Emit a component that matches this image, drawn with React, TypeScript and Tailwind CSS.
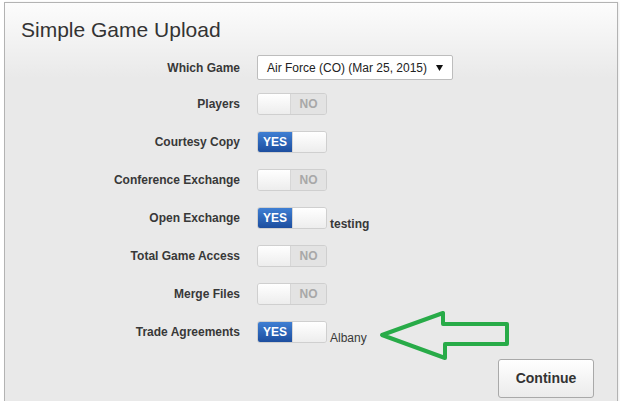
const rows: { label: string; on: boolean; note?: string; noteBold?: boolean }[] = [
  { label: 'Players', on: false },
  { label: 'Courtesy Copy', on: true },
  { label: 'Conference Exchange', on: false },
  { label: 'Open Exchange', on: true, note: 'testing', noteBold: true },
  { label: 'Total Game Access', on: false },
  { label: 'Merge Files', on: false },
  { label: 'Trade Agreements', on: true, note: 'Albany' },
];

function Toggle({ on }: { on: boolean }) {
  return (
    <div className="flex h-[22px] w-[70px] overflow-hidden rounded-[3px] border border-[#cfcfcf] text-[12px] font-bold">
      {on ? (
        <>
          <div className="flex w-[35px] items-center justify-center bg-linear-to-b from-[#3f7fd3] to-[#1d4e9f] text-white">YES</div>
          <div className="w-[35px] border-l border-[#d6d6d6] bg-linear-to-b from-white to-[#ededed]" />
        </>
      ) : (
        <>
          <div className="w-[34px] border-r border-[#d6d6d6] bg-linear-to-b from-white to-[#ededed]" />
          <div className="flex w-[36px] items-center justify-center bg-[#e3e3e3] text-[#a8a8a8]">NO</div>
        </>
      )}
    </div>
  );
}

export default function App() {
  return (
    <div className="relative h-[401px] w-[620px] overflow-hidden bg-white pl-[4px] pt-[2px] font-['Liberation_Sans',Arial,sans-serif] text-[#383838]">
      <div className="h-[420px] w-[614px] border border-[#b3b3b3] bg-[linear-gradient(to_bottom,#fcfcfc_0px,#e9e9e9_75px,#e9e9e9_100%)] shadow-[1px_0_2px_rgba(0,0,0,0.08)]">
        <h1 className="pl-[16px] pt-[15px] text-[21px] leading-[24px] text-[#333]">Simple Game Upload</h1>

        <div className="mt-[13px]">
          <div className="flex items-center">
            <div className="w-[235px] text-right text-[12px] font-bold">Which Game</div>
            <div className="ml-[17px] flex h-[25px] w-[196px] items-center justify-between rounded-[2px] border border-[#bdbdbd] bg-white pl-[9px] pr-[9px] text-[12px] text-[#222]">
              <span>Air Force (CO) (Mar 25, 2015)</span>
              <svg width="7" height="6" viewBox="0 0 7 6">
                <path d="M0 0 H7 L3.5 6 Z" fill="#111" />
              </svg>
            </div>
          </div>

          <div className="mt-[13px] flex flex-col gap-[16px]">
            {rows.map((r) => (
              <div key={r.label} className="flex h-[22px] items-center">
                <div className="w-[235px] text-right text-[12px] font-bold">{r.label}</div>
                <div className="ml-[17px]">
                  <Toggle on={r.on} />
                </div>
                {r.note && (
                  <span
                    className={`ml-[3px] self-end translate-y-[1px] text-[12px] leading-[12px] ${r.noteBold ? 'font-bold' : ''}`}
                  >
                    {r.note}
                  </span>
                )}
              </div>
            ))}
          </div>

          <div className="mt-[16px] flex justify-end pr-[23px]">
            <button className="h-[39px] w-[96px] rounded-[3px] border border-[#a9a9a9] bg-linear-to-b from-white to-[#ebebeb] text-[14px] font-bold text-[#333]">
              Continue
            </button>
          </div>
        </div>
      </div>

      <svg className="pointer-events-none absolute left-0 top-0" width="620" height="401" viewBox="0 0 620 401">
        <polygon
          points="382,335 443,313 443,324 507,324 507,344 445,344 445,358"
          fill="none"
          stroke="#28ab48"
          strokeWidth="4"
          strokeLinejoin="round"
        />
      </svg>
    </div>
  );
}
